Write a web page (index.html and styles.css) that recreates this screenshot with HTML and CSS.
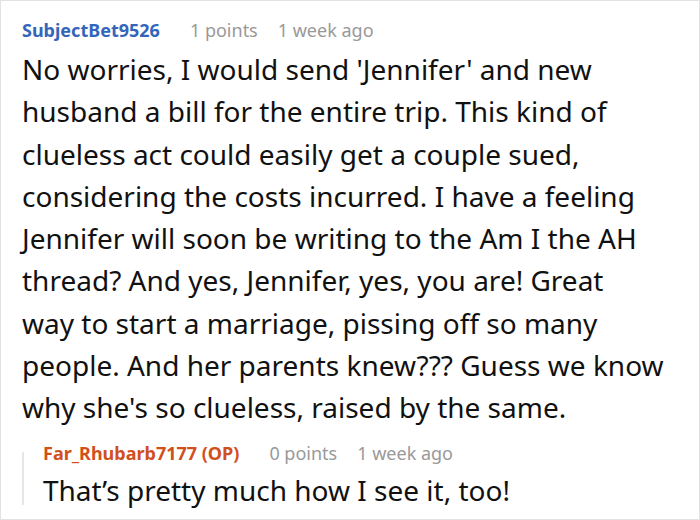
FILE: index.html
```html
<!DOCTYPE html>
<html>
<head>
<meta charset="utf-8">
<link rel="stylesheet" href="styles.css">
</head>
<body>
<div class="frame">
  <div class="comment">
    <div class="meta">
      <span class="user">SubjectBet9526</span>
      <span class="points">1 points</span>
      <span class="date">1 week ago</span>
    </div>
    <p class="text">No worries, I would send 'Jennifer' and new<br> husband a bill for the entire trip. This kind of<br> clueless act could easily get a couple sued,<br> considering the costs incurred. I have a feeling<br> Jennifer will soon be writing to the Am I the AH<br> thread? And yes, Jennifer, yes, you are! Great<br> way to start a marriage, pissing off so many<br> people. And her parents knew??? Guess we know<br> why she's so clueless, raised by the same.</p>
    <div class="reply">
      <div class="meta">
        <span class="user op">Far_Rhubarb7177 (OP)</span>
        <span class="points">0 points</span>
        <span class="date">1 week ago</span>
      </div>
      <p class="text">That’s pretty much how I see it, too!</p>
    </div>
  </div>
</div>
</body>
</html>
```

FILE: styles.css
```css
html, body {
  margin: 0;
  padding: 0;
  background: #ffffff;
}
.frame {
  width: 700px;
  height: 520px;
  box-sizing: border-box;
  border: 1px solid #e2e2e2;
  overflow: hidden;
  font-family: "Noto Sans", "Open Sans", sans-serif;
}
.comment {
  padding: 16px 16px 0 21px;
}
.meta {
  display: flex;
  align-items: baseline;
  font-size: 18px;
  line-height: 26px;
  color: #999999;
}
.user {
  font-weight: 700;
  color: #3366bb;
}
.user.op {
  color: #d14f1c;
}
.points {
  margin-left: 30px;
}
.date {
  margin-left: 20px;
}
.text {
  margin: 5px 0 0 0;
  font-size: 28px;
  line-height: 42.3px;
  color: #111111;
}
.reply {
  position: relative;
  margin-top: 11px;
  padding-left: 21px;
}
.reply::before {
  content: "";
  position: absolute;
  left: 0;
  top: 12px;
  bottom: 6px;
  width: 2px;
  background: #e6e6e6;
}
.reply .text {
  margin-top: 3px;
}
```
